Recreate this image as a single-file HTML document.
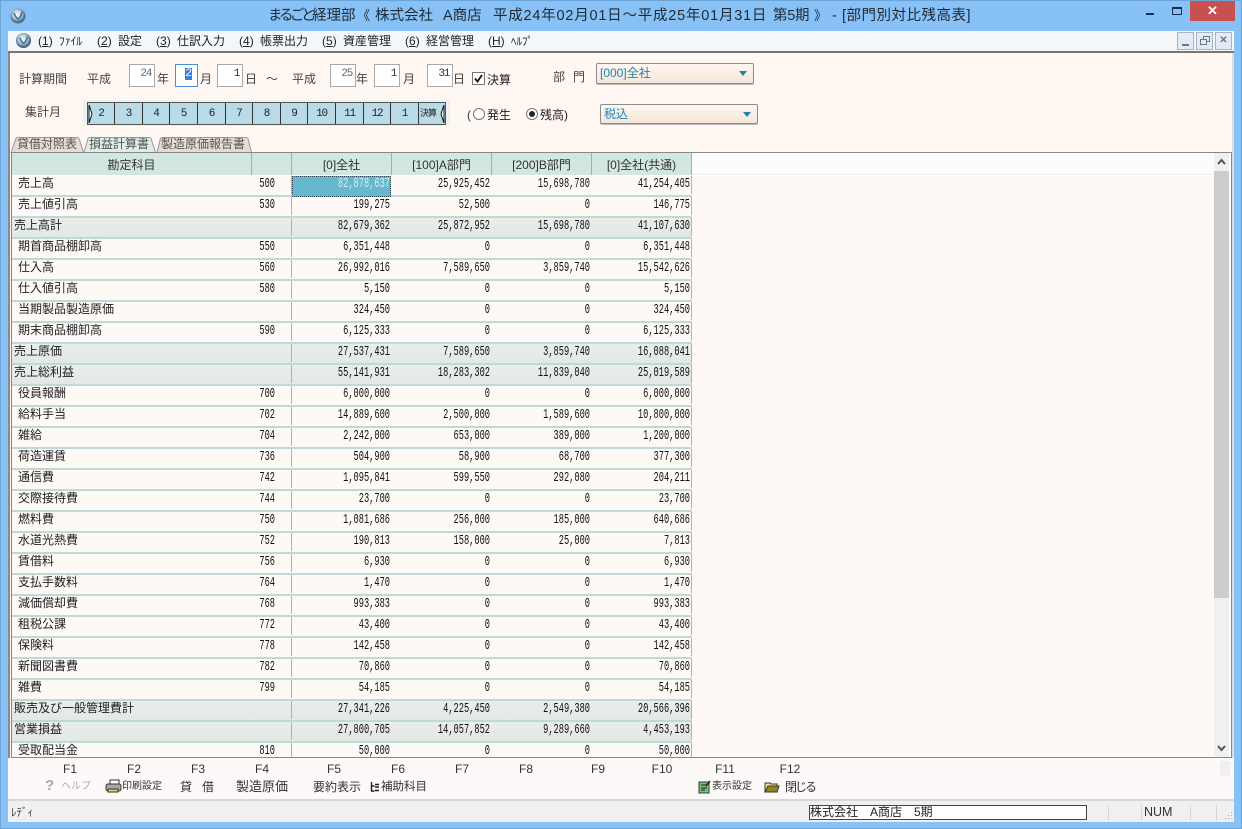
<!DOCTYPE html>
<html lang="ja"><head><meta charset="utf-8"><title>まるごと経理部</title>
<style>
*{box-sizing:border-box}
html,body{margin:0;padding:0;width:1242px;height:829px;overflow:hidden;background:#87c1f5}
body{font-family:"Liberation Sans","Noto Sans CJK JP",sans-serif;font-size:12px;color:#222;position:relative}
.a{position:absolute;white-space:nowrap;line-height:14px}
.tt{position:absolute;top:7px;white-space:nowrap;font-size:14.5px;line-height:18px;color:#1f2a36}
.m{display:inline-block;width:21px}
.box{position:absolute;background:#fff;border:1px solid #a9a9a9;font:11px/14px "Liberation Mono",monospace;letter-spacing:-1.3px;text-align:right;padding:2px 3px 0 0;color:#333}
.combo{position:absolute;border:1px solid #8d8d8d;border-radius:2px;background:linear-gradient(#fff8f2,#f5e6d8);color:#1d84b5;line-height:18px;padding-left:3px;box-shadow:0 1px 0 #bbb}
.combo i{position:absolute;right:6px;top:7px;border:4px solid transparent;border-top:5px solid #2380b0;border-bottom:0}
.mon{position:absolute;left:83px;top:100px;width:367px;height:26px;background:#eef1f2}
.mb{position:absolute;left:87px;top:102px;width:359px;height:23px;background:#b9dbe8;border:1px solid #555}
.mb span{position:absolute;top:0;height:21px;border-right:1px solid #333;text-align:center;font:11px/22px "Liberation Mono",monospace;letter-spacing:-1.2px;color:#222}
.tabs{position:absolute;left:0;top:136px}
.tabt{position:absolute;top:137px;line-height:15px;color:#555;white-space:nowrap}
.grid{position:absolute;left:11px;top:152px;width:1221px;height:606px;border:1px solid #888;background:#fff;overflow:hidden}
.r{position:absolute;left:0;width:680px;height:21px;background:#fff9f6;border-bottom:2px solid #bfd8d9}
.r.t{background:linear-gradient(#eaeeea,#e2e8e4)}
.r::before,.r::after{content:"";position:absolute;top:0;width:1px;height:18px;background:#8fc0c4}
.r::before{left:279px}.r::after{left:679px}
.r b{position:absolute;font-weight:normal;top:0;white-space:nowrap}
.l{left:6px;line-height:14px;color:#222}
.r.t .l{left:2px}
.c,.n{top:1px!important;font:14px/14px "Liberation Mono",monospace;text-align:right;transform:scaleX(.62);transform-origin:100% 50%;color:#111}
.c{left:200px;width:63px}
.n{width:99px}
.n1{left:279px}.n2{left:379px}.n3{left:479px}.n4{left:579px}
.hl{position:absolute;left:280px;top:0;width:99px;height:21px;background:#66b8cf;outline:1px dotted #345;outline-offset:-1px}
.h{position:absolute;left:0;top:0;width:680px;height:22px;background:#d2e6e2}
.h span{position:absolute;top:0;height:22px;line-height:24px;text-align:center;border-right:1px solid #8fb7b7;color:#333}
.f{position:absolute;top:763px;width:40px;text-align:center;line-height:12px;color:#333;font-size:12px}
.fb{position:absolute;top:780px;white-space:nowrap;line-height:14px;color:#333}
</style></head><body>
<!-- title bar -->
<div class="a" style="left:0;top:0;width:1242px;height:1px;background:#6ca4d6"></div>
<svg class="a" style="left:9px;top:7px" width="18" height="18" viewBox="0 0 18 18"><defs><radialGradient id="g" cx=".45" cy=".4"><stop offset="0" stop-color="#ffffff"/><stop offset=".6" stop-color="#b9c6d6"/><stop offset="1" stop-color="#4f6a8e"/></radialGradient></defs><circle cx="9" cy="9" r="7.5" fill="url(#g)"/><path d="M5 6q2 5 4 6q3-2 4-7" fill="none" stroke="#2f7d92" stroke-width="1.6"/></svg>
<div class="tt" style="left:268px;letter-spacing:-3.5px">まるごと</div>
<div class="tt" style="left:312px">経理部</div>
<div class="tt" style="left:357px;font-size:13px">《</div>
<div class="tt" style="left:375px">株式会社</div>
<div class="tt" style="left:443px">A商店</div>
<div class="tt" style="left:493px;letter-spacing:.78px">平成24年02月01日～平成25年01月31日</div>
<div class="tt" style="left:773px;letter-spacing:-.3px">第5期</div>
<div class="tt" style="left:814px;font-size:13px">》</div>
<div class="tt" style="left:832px">-</div>
<div class="tt" style="left:842px;letter-spacing:.5px">[部門別対比残高表]</div>
<div class="a" style="left:1146px;top:13px;width:8px;height:2px;background:#16304d"></div>
<div class="a" style="left:1172px;top:7px;width:10px;height:8px;border:1px solid #16304d;border-top-width:2px"></div>
<div class="a" style="left:1190px;top:1px;width:45px;height:20px;background:#c75050;color:#fff;text-align:center;font-size:13px;line-height:20px;font-weight:bold">✕</div>
<!-- menu -->
<div class="a" style="left:8px;top:31px;width:1226px;height:20px;background:#f4f7fa"></div>
<svg class="a" style="left:15px;top:32px" width="17" height="17" viewBox="0 0 18 18"><circle cx="9" cy="9" r="8" fill="url(#g)"/><path d="M5 6q2 5 4 6q3-2 4-7" fill="none" stroke="#2f7d92" stroke-width="1.6"/></svg>
<div class="a" style="left:38px;top:34px"><span class="m">(<u>1</u>)</span><span style="font-size:11.5px">ﾌｧｲﾙ</span></div>
<div class="a" style="left:97px;top:34px"><span class="m">(<u>2</u>)</span>設定</div>
<div class="a" style="left:156px;top:34px"><span class="m">(<u>3</u>)</span>仕訳入力</div>
<div class="a" style="left:239px;top:34px"><span class="m">(<u>4</u>)</span>帳票出力</div>
<div class="a" style="left:322px;top:34px"><span class="m">(<u>5</u>)</span>資産管理</div>
<div class="a" style="left:405px;top:34px"><span class="m">(<u>6</u>)</span>経営管理</div>
<div class="a" style="left:488px;top:34px"><span class="m" style="width:23px">(<u>H</u>)</span><span style="font-size:11px">ﾍﾙﾌﾟ</span></div>
<div class="a" style="left:1177px;top:32px;width:17px;height:18px;background:#e3ebf3;border:1px solid #a8b6c4"><div style="position:absolute;left:4px;top:11px;width:7px;height:2px;background:#6d7885"></div></div>
<div class="a" style="left:1196px;top:32px;width:17px;height:18px;background:#e3ebf3;border:1px solid #a8b6c4"><div style="position:absolute;left:6px;top:3px;width:7px;height:6px;border:1px solid #6d7885"></div><div style="position:absolute;left:3px;top:6px;width:7px;height:6px;border:1px solid #6d7885;background:#e3ebf3"></div></div>
<div class="a" style="left:1215px;top:32px;width:17px;height:18px;background:#e3ebf3;border:1px solid #a8b6c4;color:#6d7885;text-align:center;font-size:10px;line-height:16px;font-weight:bold">✕</div>
<!-- content -->
<div class="a" style="left:8px;top:51px;width:1226px;height:2px;background:#7a7570"></div>
<div class="a" style="left:8px;top:53px;width:1226px;height:705px;background:#fff7f2;border-left:2px solid #8a8a8a;border-right:2px solid #ddd"></div>
<div class="a" style="left:19px;top:72px;color:#444">計算期間</div>
<div class="a" style="left:87px;top:72px;color:#444">平成</div>
<div class="box" style="left:129px;top:64px;width:26px;height:23px;color:#666">24</div>
<div class="a" style="left:157px;top:72px;color:#444">年</div>
<div class="box" style="left:175px;top:64px;width:23px;height:23px;border-color:#4a90d9;padding-right:5px;letter-spacing:0"><span style="background:#3d7fd0;color:#fff">2</span></div>
<div class="a" style="left:200px;top:72px;color:#444">月</div>
<div class="box" style="left:217px;top:64px;width:26px;height:23px">1</div>
<div class="a" style="left:245px;top:72px;color:#444">日</div>
<div class="a" style="left:266px;top:72px;color:#444">～</div>
<div class="a" style="left:292px;top:72px;color:#444">平成</div>
<div class="box" style="left:330px;top:64px;width:26px;height:23px;color:#666">25</div>
<div class="a" style="left:356px;top:72px;color:#444">年</div>
<div class="box" style="left:374px;top:64px;width:26px;height:23px">1</div>
<div class="a" style="left:403px;top:72px;color:#444">月</div>
<div class="box" style="left:427px;top:64px;width:26px;height:23px">31</div>
<div class="a" style="left:453px;top:72px;color:#444">日</div>
<div class="a" style="left:472px;top:72px;width:13px;height:13px;background:#fff;border:1px solid #777"><svg style="position:absolute;left:0;top:0" width="11" height="11"><path d="M2 5.500l2.500 3 4.500-6.500" fill="none" stroke="#111" stroke-width="1.800"/></svg></div>
<div class="a" style="left:487px;top:73px;color:#222">決算</div>
<div class="a" style="left:553px;top:70px;color:#444">部</div>
<div class="a" style="left:573px;top:70px;color:#444">門</div>
<div class="combo" style="left:596px;top:63px;width:158px;height:21px">[000]全社<i></i></div>
<div class="a" style="left:25px;top:105px;color:#444">集計月</div>
<div class="mon"></div>
<div class="mb">
<span style="left:0;width:27px">2</span><span style="left:27px;width:28px">3</span><span style="left:55px;width:27px">4</span><span style="left:82px;width:28px">5</span><span style="left:110px;width:28px">6</span><span style="left:138px;width:27px">7</span><span style="left:165px;width:28px">8</span><span style="left:193px;width:27px">9</span><span style="left:220px;width:28px">10</span><span style="left:248px;width:28px">11</span><span style="left:276px;width:27px">12</span><span style="left:303px;width:28px">1</span>
<span style="left:331px;width:26px;border:0;font:9px/21px 'Liberation Sans','Noto Sans CJK JP',sans-serif;letter-spacing:-1px;text-align:left;padding-left:1px">決算</span>
<svg style="position:absolute;left:0;top:0" width="6" height="21"><path d="M1 2l3 9-3 9z" fill="#fff" stroke="#111"/></svg>
<svg style="position:absolute;left:351px;top:0" width="6" height="21"><path d="M5 2l-3 9 3 9z" fill="#fff" stroke="#111"/></svg>
</div>
<div class="a" style="left:467px;top:108px;color:#333">(</div>
<svg class="a" style="left:472px;top:107px" width="14" height="14"><circle cx="7" cy="7" r="5.500" fill="#fff" stroke="#777"/></svg>
<div class="a" style="left:487px;top:108px;color:#222">発生</div>
<svg class="a" style="left:525px;top:107px" width="14" height="14"><circle cx="7" cy="7" r="5.500" fill="#fff" stroke="#777"/><circle cx="7" cy="7" r="3" fill="#222"/></svg>
<div class="a" style="left:540px;top:108px;color:#222">残高)</div>
<div class="combo" style="left:600px;top:104px;width:158px;height:20px">税込<i></i></div>
<svg class="tabs" width="260" height="17"><path d="M11 16.500L16 2.500Q16.500 1.500 18 1.500H77Q78.500 1.500 79 2.500L83.500 16.500z" fill="#e7dcd5" stroke="#999"/><path d="M157 16.500L160.500 2.500Q161 1.500 162 1.500H246Q247.500 1.500 248 2.500L251.500 16.500z" fill="#e7dcd5" stroke="#999"/><path d="M84 16.500L88 2.500Q88.500 1.500 90 1.500H149Q150.500 1.500 151 2.500L155.500 16.500z" fill="#deede6" stroke="#999"/></svg>
<div class="tabt" style="left:17px">貸借対照表</div>
<div class="tabt" style="left:89px">損益計算書</div>
<div class="tabt" style="left:161px">製造原価報告書</div>
<!-- grid -->
<div class="grid">
<div class="h"><span style="left:0;width:240px">勘定科目</span><span style="left:240px;width:40px"></span><span style="left:280px;width:100px">[0]全社</span><span style="left:380px;width:100px">[100]A部門</span><span style="left:480px;width:100px">[200]B部門</span><span style="left:580px;width:100px">[0]全社(共通)</span></div>
<div class="r" style="top:23px"><i class="hl"></i><b class="l">売上高</b><b class="c">500</b><b class="n n1" style="color:#d5eef5">82,878,637</b><b class="n n2">25,925,452</b><b class="n n3">15,698,780</b><b class="n n4">41,254,405</b></div>
<div class="r" style="top:44px"><b class="l">売上値引高</b><b class="c">530</b><b class="n n1">199,275</b><b class="n n2">52,500</b><b class="n n3">0</b><b class="n n4">146,775</b></div>
<div class="r t" style="top:65px"><b class="l">売上高計</b><b class="n n1">82,679,362</b><b class="n n2">25,872,952</b><b class="n n3">15,698,780</b><b class="n n4">41,107,630</b></div>
<div class="r" style="top:86px"><b class="l">期首商品棚卸高</b><b class="c">550</b><b class="n n1">6,351,448</b><b class="n n2">0</b><b class="n n3">0</b><b class="n n4">6,351,448</b></div>
<div class="r" style="top:107px"><b class="l">仕入高</b><b class="c">560</b><b class="n n1">26,992,016</b><b class="n n2">7,589,650</b><b class="n n3">3,859,740</b><b class="n n4">15,542,626</b></div>
<div class="r" style="top:128px"><b class="l">仕入値引高</b><b class="c">580</b><b class="n n1">5,150</b><b class="n n2">0</b><b class="n n3">0</b><b class="n n4">5,150</b></div>
<div class="r" style="top:149px"><b class="l">当期製品製造原価</b><b class="n n1">324,450</b><b class="n n2">0</b><b class="n n3">0</b><b class="n n4">324,450</b></div>
<div class="r" style="top:170px"><b class="l">期末商品棚卸高</b><b class="c">590</b><b class="n n1">6,125,333</b><b class="n n2">0</b><b class="n n3">0</b><b class="n n4">6,125,333</b></div>
<div class="r t" style="top:191px"><b class="l">売上原価</b><b class="n n1">27,537,431</b><b class="n n2">7,589,650</b><b class="n n3">3,859,740</b><b class="n n4">16,088,041</b></div>
<div class="r t" style="top:212px"><b class="l">売上総利益</b><b class="n n1">55,141,931</b><b class="n n2">18,283,302</b><b class="n n3">11,839,040</b><b class="n n4">25,019,589</b></div>
<div class="r" style="top:233px"><b class="l">役員報酬</b><b class="c">700</b><b class="n n1">6,000,000</b><b class="n n2">0</b><b class="n n3">0</b><b class="n n4">6,000,000</b></div>
<div class="r" style="top:254px"><b class="l">給料手当</b><b class="c">702</b><b class="n n1">14,889,600</b><b class="n n2">2,500,000</b><b class="n n3">1,589,600</b><b class="n n4">10,800,000</b></div>
<div class="r" style="top:275px"><b class="l">雑給</b><b class="c">704</b><b class="n n1">2,242,000</b><b class="n n2">653,000</b><b class="n n3">389,000</b><b class="n n4">1,200,000</b></div>
<div class="r" style="top:296px"><b class="l">荷造運賃</b><b class="c">736</b><b class="n n1">504,900</b><b class="n n2">58,900</b><b class="n n3">68,700</b><b class="n n4">377,300</b></div>
<div class="r" style="top:317px"><b class="l">通信費</b><b class="c">742</b><b class="n n1">1,095,841</b><b class="n n2">599,550</b><b class="n n3">292,080</b><b class="n n4">204,211</b></div>
<div class="r" style="top:338px"><b class="l">交際接待費</b><b class="c">744</b><b class="n n1">23,700</b><b class="n n2">0</b><b class="n n3">0</b><b class="n n4">23,700</b></div>
<div class="r" style="top:359px"><b class="l">燃料費</b><b class="c">750</b><b class="n n1">1,081,686</b><b class="n n2">256,000</b><b class="n n3">185,000</b><b class="n n4">640,686</b></div>
<div class="r" style="top:380px"><b class="l">水道光熱費</b><b class="c">752</b><b class="n n1">190,813</b><b class="n n2">158,000</b><b class="n n3">25,000</b><b class="n n4">7,813</b></div>
<div class="r" style="top:401px"><b class="l">賃借料</b><b class="c">756</b><b class="n n1">6,930</b><b class="n n2">0</b><b class="n n3">0</b><b class="n n4">6,930</b></div>
<div class="r" style="top:422px"><b class="l">支払手数料</b><b class="c">764</b><b class="n n1">1,470</b><b class="n n2">0</b><b class="n n3">0</b><b class="n n4">1,470</b></div>
<div class="r" style="top:443px"><b class="l">減価償却費</b><b class="c">768</b><b class="n n1">993,383</b><b class="n n2">0</b><b class="n n3">0</b><b class="n n4">993,383</b></div>
<div class="r" style="top:464px"><b class="l">租税公課</b><b class="c">772</b><b class="n n1">43,400</b><b class="n n2">0</b><b class="n n3">0</b><b class="n n4">43,400</b></div>
<div class="r" style="top:485px"><b class="l">保険料</b><b class="c">778</b><b class="n n1">142,458</b><b class="n n2">0</b><b class="n n3">0</b><b class="n n4">142,458</b></div>
<div class="r" style="top:506px"><b class="l">新聞図書費</b><b class="c">782</b><b class="n n1">70,860</b><b class="n n2">0</b><b class="n n3">0</b><b class="n n4">70,860</b></div>
<div class="r" style="top:527px"><b class="l">雑費</b><b class="c">799</b><b class="n n1">54,185</b><b class="n n2">0</b><b class="n n3">0</b><b class="n n4">54,185</b></div>
<div class="r t" style="top:548px"><b class="l">販売及び一般管理費計</b><b class="n n1">27,341,226</b><b class="n n2">4,225,450</b><b class="n n3">2,549,380</b><b class="n n4">20,566,396</b></div>
<div class="r t" style="top:569px"><b class="l">営業損益</b><b class="n n1">27,800,705</b><b class="n n2">14,057,852</b><b class="n n3">9,289,660</b><b class="n n4">4,453,193</b></div>
<div class="r" style="top:590px"><b class="l">受取配当金</b><b class="c">810</b><b class="n n1">50,000</b><b class="n n2">0</b><b class="n n3">0</b><b class="n n4">50,000</b></div>
<div style="position:absolute;left:680px;top:0;width:522px;height:22px;background:#fdfcfd;border-bottom:1px solid #ececf4"></div>
<div style="position:absolute;left:680px;top:23px;width:522px;height:581px;background:#fff9f6"></div>
<!-- scrollbar -->
<div style="position:absolute;left:1202px;top:0;width:15px;height:604px;background:#f0f0f0"></div>
<div style="position:absolute;left:1202px;top:18px;width:15px;height:427px;background:#cdcdcd"></div>
<svg style="position:absolute;left:1202px;top:0" width="15" height="18"><path d="M4 11l3.500-4 3.500 4" fill="none" stroke="#555" stroke-width="2"/></svg>
<svg style="position:absolute;left:1202px;top:586px" width="15" height="18"><path d="M4 7l3.500 4 3.500-4" fill="none" stroke="#555" stroke-width="2"/></svg>
</div>
<!-- function bar -->
<div class="a" style="left:8px;top:758px;width:1226px;height:41px;background:#fdf9f8"></div>
<div class="a" style="left:1220px;top:761px;width:10px;height:15px;background:#f0f0f0"></div>
<div class="f" style="left:50px">F1</div><div class="f" style="left:114px">F2</div><div class="f" style="left:178px">F3</div><div class="f" style="left:242px">F4</div><div class="f" style="left:314px">F5</div><div class="f" style="left:378px">F6</div><div class="f" style="left:442px">F7</div><div class="f" style="left:506px">F8</div><div class="f" style="left:578px">F9</div><div class="f" style="left:642px">F10</div><div class="f" style="left:705px">F11</div><div class="f" style="left:770px">F12</div>
<div class="fb" style="left:45px;top:779px;font-weight:bold;color:#aaa;font-size:15px">?</div>
<div class="fb" style="left:61px;color:#aaa;font-size:10px">ヘルプ</div>
<svg class="a" style="left:105px;top:779px" width="17" height="15"><rect x="5" y="1" width="9" height="4" fill="#fff" stroke="#333"/><rect x="1" y="5" width="15" height="7" rx="2" fill="#a8a8a8" stroke="#333"/><rect x="3" y="10" width="10" height="3" fill="#e3d35a" stroke="#333"/></svg>
<div class="fb" style="left:122px;font-size:10px">印刷設定</div>
<div class="fb" style="left:180px">貸</div><div class="fb" style="left:202px">借</div>
<div class="fb" style="left:236px;font-size:13px">製造原価</div>
<div class="fb" style="left:313px">要約表示</div>
<svg class="a" style="left:370px;top:781px" width="10" height="12"><path d="M1.500 1v9h3M1.500 5h3M5 3.500h4M5 6h4M5 9.500h4" fill="none" stroke="#222" stroke-width="1.400"/></svg>
<div class="fb" style="left:381px;font-size:11.500px">補助科目</div>
<svg class="a" style="left:698px;top:780px" width="13" height="14"><rect x="1" y="2" width="10" height="11" fill="#7bbf7b" stroke="#1d4a1d"/><path d="M3 5h6M3 8h6M3 10h4" stroke="#123"/><path d="M8 6l4-5" stroke="#222" stroke-width="1.500"/></svg>
<div class="fb" style="left:712px;font-size:10px">表示設定</div>
<svg class="a" style="left:764px;top:779px" width="16" height="14"><path d="M1 4h5l1 1h6v8H1z" fill="#f1e39a" stroke="#333"/><path d="M1 13l3-6h11l-2 6z" fill="#8f8a1e" stroke="#333"/></svg>
<div class="fb" style="left:785px;letter-spacing:-2px">閉じる</div>
<!-- status bar -->
<div class="a" style="left:8px;top:799px;width:1226px;height:23px;background:#f0f0f0;border-top:2px solid #d8d8d8"></div>
<div class="a" style="left:11px;top:806px;font-size:11px;color:#333">ﾚﾃﾞｨ</div>
<div class="a" style="left:809px;top:805px;width:278px;height:15px;background:#fff;border:1px solid #444;line-height:13px;color:#222">株式会社　A商店　5期</div>
<div class="a" style="left:1108px;top:805px;width:1px;height:15px;background:#d5d5d5"></div>
<div class="a" style="left:1141px;top:805px;width:50px;height:15px;border-left:1px solid #d5d5d5;border-right:1px solid #d5d5d5;line-height:15px;padding-left:2px;color:#333;font-size:12.500px">NUM</div>
<div class="a" style="left:1216px;top:805px;width:1px;height:15px;background:#d5d5d5"></div>
<svg class="a" style="left:1224px;top:811px" width="9" height="9"><path d="M7 1h1v1H7zM4 4h1v1H4zM7 4h1v1H7zM1 7h1v1H1zM4 7h1v1H4zM7 7h1v1H7z" fill="#aaa"/></svg>
<div class="a" style="left:0;top:828px;width:1242px;height:1px;background:#6ca4d6"></div>
<div class="a" style="left:0;top:0;width:1px;height:829px;background:#6ca4d6"></div>
<div class="a" style="left:1241px;top:0;width:1px;height:829px;background:#6ca4d6"></div>
</body></html>
